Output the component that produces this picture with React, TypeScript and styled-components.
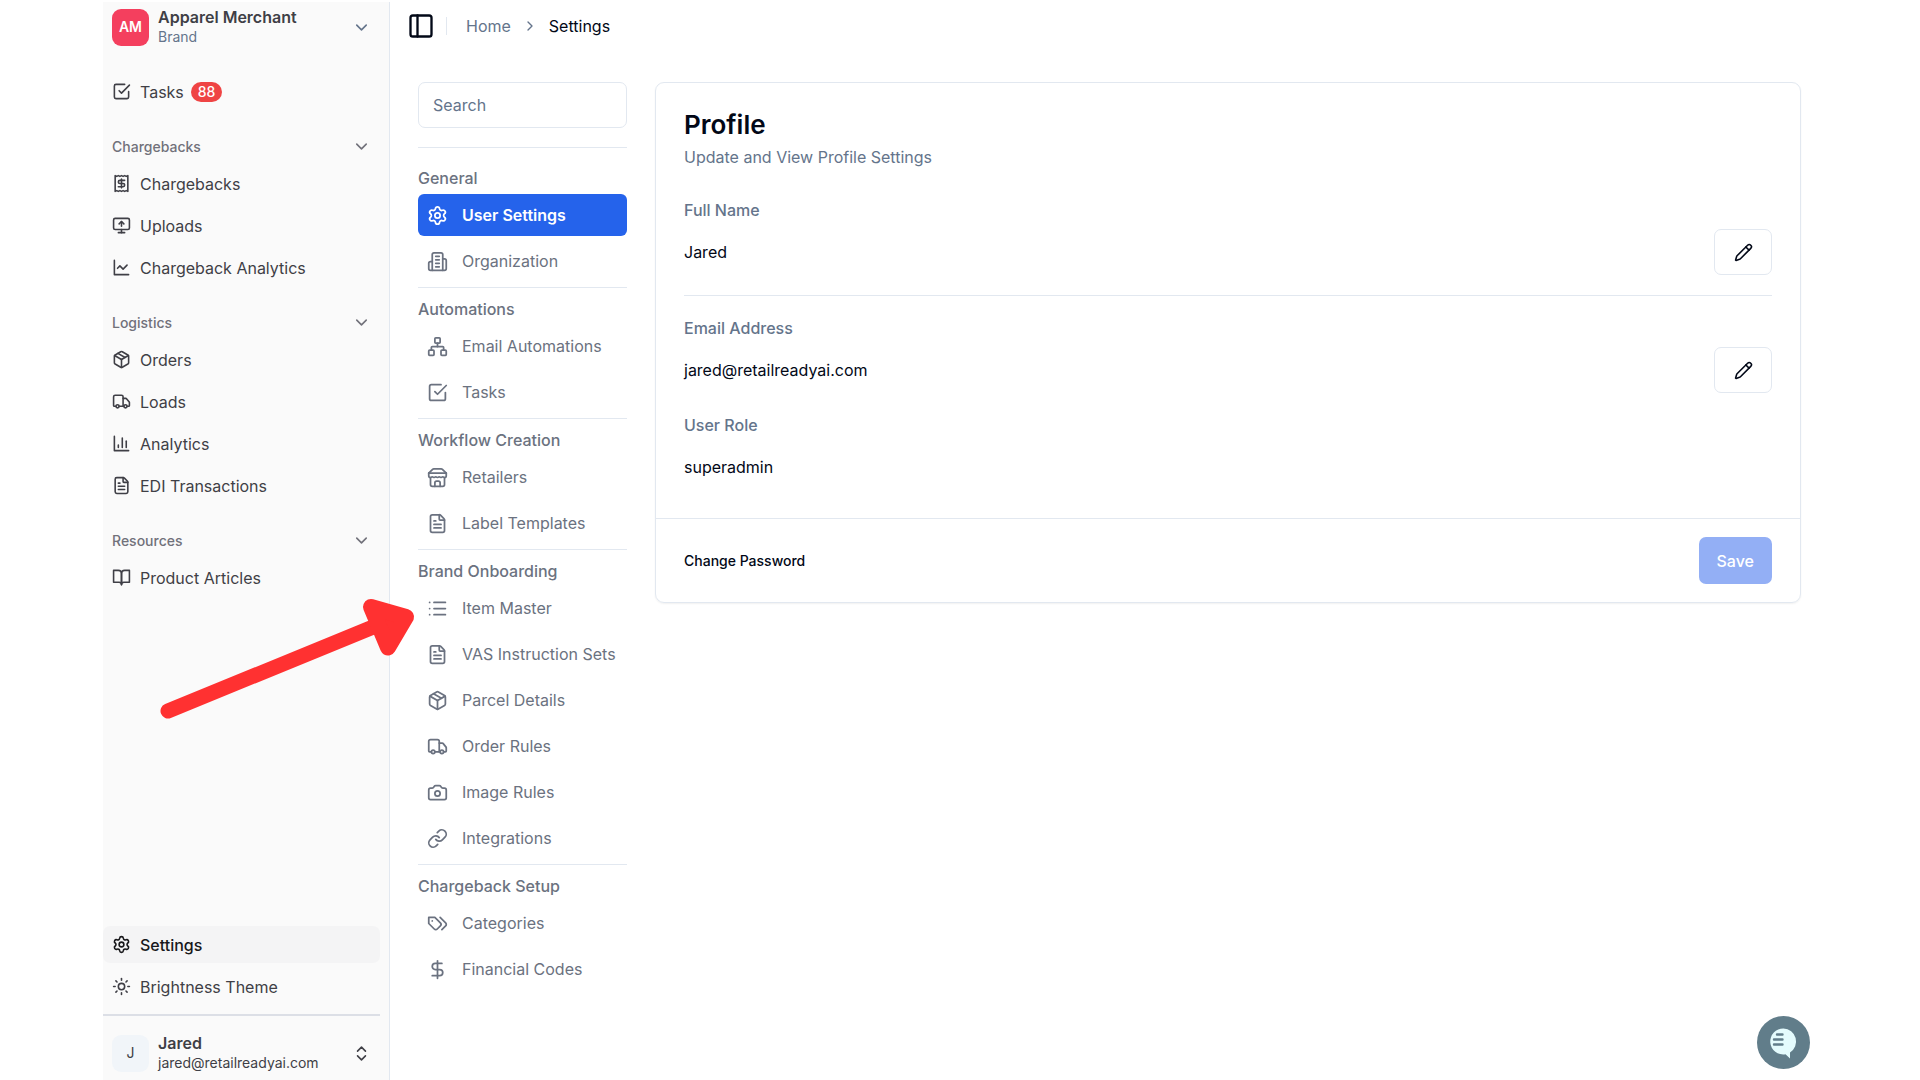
import React from "react";
import styled, { createGlobalStyle, css } from "styled-components";
import {
  Camera,
  ChevronDown,
  ChevronRight,
  ChevronsUpDown,
  DollarSign,
  FileText,
  Link,
  List,
  LucideIcon,
  MonitorUp,
  Network,
  Package,
  PanelLeft,
  Pencil,
  Settings,
  Sun,
  Truck,
} from "lucide-react";

const GlobalStyle = createGlobalStyle`
  *, *::before, *::after { box-sizing: border-box; }
  body {
    margin: 0;
    background: #ffffff;
    color: #020817;
    font-family: Inter, "Liberation Sans", sans-serif;
    font-size: 16px;
    line-height: 24px;
  }
  button, input { font: inherit; color: inherit; }
  button { cursor: pointer; }
  a { color: inherit; text-decoration: none; }
  h1, h2, p, ul, dl, dd { margin: 0; padding: 0; }
  ul { list-style: none; }
  svg { flex-shrink: 0; }
`;

type GlyphProps = { size?: number };

const stroke = (size: number) => ({
  width: size,
  height: size,
  viewBox: "0 0 24 24",
  fill: "none",
  stroke: "currentColor",
  strokeWidth: 2,
  strokeLinecap: "round" as const,
  strokeLinejoin: "round" as const,
  "aria-hidden": true,
});

const TaskIcon = ({ size = 24 }: GlyphProps) => (
  <svg {...stroke(size)}>
    <path d="m9 11 3 3L22 4" />
    <path d="M21 12v7a2 2 0 0 1-2 2H5a2 2 0 0 1-2-2V5a2 2 0 0 1 2-2h11" />
  </svg>
);

const ReceiptIcon = ({ size = 24 }: GlyphProps) => (
  <svg {...stroke(size)}>
    <path d="M4 2v20l2-1 2 1 2-1 2 1 2-1 2 1 2-1 2 1V2l-2 1-2-1-2 1-2-1-2 1-2-1-2 1Z" />
    <path d="M16 8h-6a2 2 0 1 0 0 4h4a2 2 0 1 1 0 4H8" />
    <path d="M12 17.5v-11" />
  </svg>
);

const LineChartIcon = ({ size = 24 }: GlyphProps) => (
  <svg {...stroke(size)}>
    <path d="M3 3v18h18" />
    <path d="m19 9-5 5-4-4-3 3" />
  </svg>
);

const BarChartIcon = ({ size = 24 }: GlyphProps) => (
  <svg {...stroke(size)}>
    <path d="M3 3v18h18" />
    <path d="M18 17V9" />
    <path d="M13 17V5" />
    <path d="M8 17v-3" />
  </svg>
);

const BookIcon = ({ size = 24 }: GlyphProps) => (
  <svg {...stroke(size)}>
    <path d="M2 3h6a4 4 0 0 1 4 4v14a3 3 0 0 0-3-3H2z" />
    <path d="M22 3h-6a4 4 0 0 0-4 4v14a3 3 0 0 1 3-3h7z" />
  </svg>
);

const BuildingIcon = ({ size = 24 }: GlyphProps) => (
  <svg {...stroke(size)}>
    <path d="M6 22V4a2 2 0 0 1 2-2h8a2 2 0 0 1 2 2v18Z" />
    <path d="M6 12H4a2 2 0 0 0-2 2v6a2 2 0 0 0 2 2h2" />
    <path d="M18 9h2a2 2 0 0 1 2 2v9a2 2 0 0 1-2 2h-2" />
    <path d="M10 6h4M10 10h4M10 14h4M10 18h4" />
  </svg>
);

const StoreIcon = ({ size = 24 }: GlyphProps) => (
  <svg {...stroke(size)}>
    <path d="m2 7 4.410-4.410A2 2 0 0 1 7.830 2h8.340a2 2 0 0 1 1.420.59L22 7" />
    <path d="M4 12v8a2 2 0 0 0 2 2h12a2 2 0 0 0 2-2v-8" />
    <path d="M15 22v-4a2 2 0 0 0-2-2h-2a2 2 0 0 0-2 2v4" />
    <path d="M2 7h20" />
    <path d="M22 7v3a2 2 0 0 1-2 2a2.700 2.700 0 0 1-1.590-.63.7.7 0 0 0-.82 0A2.700 2.700 0 0 1 16 12a2.700 2.700 0 0 1-1.590-.63.7.7 0 0 0-.82 0A2.700 2.700 0 0 1 12 12a2.700 2.700 0 0 1-1.590-.63.7.7 0 0 0-.82 0A2.700 2.700 0 0 1 8 12a2.700 2.700 0 0 1-1.590-.63.7.7 0 0 0-.82 0A2.700 2.700 0 0 1 4 12a2 2 0 0 1-2-2V7" />
  </svg>
);

const TagsIcon = ({ size = 24 }: GlyphProps) => (
  <svg {...stroke(size)}>
    <path d="M9 5H2v7l6.290 6.290c.94.94 2.480.94 3.420 0l3.580-3.580c.94-.94.94-2.480 0-3.420L9 5Z" />
    <path d="M6 9.010V9" />
    <path d="m15 5 6.300 6.300a2.400 2.400 0 0 1 0 3.400L17 19" />
  </svg>
);

type Icon = LucideIcon | React.FC<GlyphProps>;
type Entry = { label: string; icon: Icon; active?: boolean; count?: number };
type Section = { title: string; items: Entry[] };

const sidebarSections: Section[] = [
  {
    title: "Chargebacks",
    items: [
      { label: "Chargebacks", icon: ReceiptIcon },
      { label: "Uploads", icon: MonitorUp },
      { label: "Chargeback Analytics", icon: LineChartIcon },
    ],
  },
  {
    title: "Logistics",
    items: [
      { label: "Orders", icon: Package },
      { label: "Loads", icon: Truck },
      { label: "Analytics", icon: BarChartIcon },
      { label: "EDI Transactions", icon: FileText },
    ],
  },
  { title: "Resources", items: [{ label: "Product Articles", icon: BookIcon }] },
];

const settingsSections: Section[] = [
  {
    title: "General",
    items: [
      { label: "User Settings", icon: Settings, active: true },
      { label: "Organization", icon: BuildingIcon },
    ],
  },
  {
    title: "Automations",
    items: [
      { label: "Email Automations", icon: Network },
      { label: "Tasks", icon: TaskIcon },
    ],
  },
  {
    title: "Workflow Creation",
    items: [
      { label: "Retailers", icon: StoreIcon },
      { label: "Label Templates", icon: FileText },
    ],
  },
  {
    title: "Brand Onboarding",
    items: [
      { label: "Item Master", icon: List },
      { label: "VAS Instruction Sets", icon: FileText },
      { label: "Parcel Details", icon: Package },
      { label: "Order Rules", icon: Truck },
      { label: "Image Rules", icon: Camera },
      { label: "Integrations", icon: Link },
    ],
  },
  {
    title: "Chargeback Setup",
    items: [
      { label: "Categories", icon: TagsIcon },
      { label: "Financial Codes", icon: DollarSign },
    ],
  },
];

const Page = styled.div`
  position: relative;
  display: grid;
  grid-template-columns: 287px minmax(0, 1fr);
  min-height: 100vh;
  padding: 2px 103px 0;
`;

const Sidebar = styled.aside`
  display: flex;
  flex-direction: column;
  padding-right: 9px;
  background: #fafafa;
  border-right: 1px solid #e2e8f0;
`;

const Account = styled.button`
  display: flex;
  align-items: center;
  gap: 9px;
  padding: 0 9px;
  border: 0;
  background: none;
  color: #3f3f46;
  text-align: left;
`;

const Avatar = styled.span<{ $brand?: boolean }>`
  display: grid;
  place-items: center;
  width: 37px;
  height: 37px;
  border-radius: 9px;
  font-size: 14px;
  background: #f1f5f9;
  ${(p) =>
    p.$brand &&
    css`
      background: #f43f5e;
      color: #ffffff;
      font-weight: 600;
    `}
`;

const AccountText = styled.span`
  display: grid;
  flex: 1;
`;

const AccountName = styled.span`
  font-weight: 600;
  line-height: 20px;
`;

const AccountNote = styled.span<{ $muted?: boolean }>`
  font-size: 14px;
  line-height: 20px;
  color: ${(p) => (p.$muted ? "#64748b" : "#3f3f46")};
`;

const SidebarTop = styled.div`
  display: flex;
  flex-direction: column;
  padding: 5px 0 17px;
`;

const SidebarGroup = styled.div`
  padding: 9px 0;
`;

const GroupToggle = styled.button`
  display: flex;
  align-items: center;
  justify-content: space-between;
  width: 100%;
  height: 37px;
  padding: 0 9px;
  border: 0;
  background: none;
  color: #71717a;
  font-size: 14px;
  font-weight: 500;
`;

const SidebarList = styled.ul`
  display: grid;
  gap: 5px;
`;

const SidebarLink = styled.a<{ $active?: boolean }>`
  display: flex;
  align-items: center;
  gap: 9px;
  height: 37px;
  padding: 0 9px;
  border-radius: 7px;
  color: #3f3f46;
  ${(p) =>
    p.$active &&
    css`
      background: #f4f4f5;
      color: #18181b;
      font-weight: 500;
    `}
`;

const LinkText = styled.span`
  display: flex;
  align-items: center;
  gap: 7px;
`;

const Count = styled.span`
  padding: 0 7px;
  border-radius: 10px;
  background: #ef4444;
  color: #ffffff;
  font-size: 14px;
  font-weight: 500;
  line-height: 20px;
`;

const SidebarFooter = styled.div`
  display: flex;
  flex-direction: column;
  margin-top: auto;
  padding-bottom: 7px;
`;

const FooterRule = styled.hr`
  width: 100%;
  height: 2px;
  margin: 9px 0 17px;
  border: 0;
  background: #dcdfe6;
`;

const Content = styled.div`
  padding-left: 17px;
`;

const TopBar = styled.header`
  display: flex;
  align-items: center;
  height: 48px;
`;

const PanelButton = styled.button`
  display: flex;
  padding: 0;
  border: 0;
  background: none;
`;

const TopDivider = styled.span`
  width: 1px;
  height: 18px;
  margin: 0 19px 0 11px;
  background: #e2e8f0;
`;

const Crumbs = styled.nav`
  display: flex;
  align-items: center;
  gap: 11px;
  color: #64748b;
`;

const CurrentCrumb = styled.span`
  color: #020817;
`;

const Body = styled.div`
  display: grid;
  grid-template-columns: 209px minmax(0, 1fr);
  align-items: start;
  gap: 28px;
  padding: 32px 16px 28px 11px;
`;

const SearchInput = styled.input`
  display: block;
  width: 100%;
  height: 46px;
  padding: 0 14px;
  border: 1px solid #e2e8f0;
  border-radius: 7px;
  background: #ffffff;
  outline: 0;
  &::placeholder { color: #64748b; opacity: 1; }
`;

const SettingsNav = styled.nav`
  margin-top: 19px;
  border-top: 1px solid #e2e8f0;
  padding-top: 9px;
`;

const NavGroup = styled.section`
  padding: 9px 0 5px;
  & + & { border-top: 1px solid #e2e8f0; }
`;

const NavHeading = styled.h2`
  padding-bottom: 4px;
  color: #6b7280;
  font-size: 16px;
  font-weight: 500;
  line-height: 24px;
`;

const NavList = styled.ul`
  display: grid;
  gap: 4px;
`;

const NavLink = styled.a<{ $active?: boolean }>`
  display: flex;
  align-items: center;
  gap: 14px;
  height: 42px;
  padding: 0 9px;
  border-radius: 6px;
  color: #6b7280;
  white-space: nowrap;
  ${(p) =>
    p.$active &&
    css`
      background: #2563eb;
      color: #ffffff;
      font-weight: 600;
    `}
`;

const Card = styled.main`
  border: 1px solid #e2e8f0;
  border-radius: 9px;
  box-shadow: 0 1px 2px rgba(0, 0, 0, 0.06);
`;

const CardBody = styled.div`
  padding: 28px;
`;

const Title = styled.h1`
  font-size: 26px;
  font-weight: 600;
  line-height: 28px;
`;

const Subtitle = styled.p`
  margin: 6px 0 29px;
  color: #64748b;
`;

const Field = styled.div<{ $ruled?: boolean }>`
  padding-bottom: 20px;
  ${(p) =>
    p.$ruled &&
    css`
      margin-bottom: 20px;
      border-bottom: 1px solid #e2e8f0;
    `}
  &:last-child { padding-bottom: 0; }
`;

const FieldLabel = styled.dt`
  margin-bottom: 7px;
  color: #64748b;
  font-weight: 500;
`;

const FieldValue = styled.dd`
  display: flex;
  align-items: center;
  justify-content: space-between;
  height: 46px;
`;

const EditButton = styled.button`
  display: grid;
  place-items: center;
  width: 58px;
  height: 46px;
  border: 1px solid #e2e8f0;
  border-radius: 7px;
  background: #ffffff;
`;

const CardFooter = styled.footer`
  display: flex;
  align-items: center;
  justify-content: space-between;
  padding: 18px 28px;
  border-top: 1px solid #e2e8f0;
`;

const TextButton = styled.button`
  padding: 0;
  border: 0;
  background: none;
  font-size: 14px;
  font-weight: 500;
`;

const SaveButton = styled.button`
  height: 47px;
  padding: 0 18px;
  border: 0;
  border-radius: 7px;
  background: #93aff5;
  color: #ffffff;
  font-weight: 500;
`;

const ChatButton = styled.button`
  position: fixed;
  right: 110px;
  bottom: 11px;
  display: flex;
  padding: 0;
  border: 0;
  border-radius: 50%;
  background: none;
`;

const Arrow = styled.svg`
  position: absolute;
  left: 150px;
  top: 590px;
  pointer-events: none;
`;

const SidebarEntry = ({ label, icon: Glyph, active, count }: Entry) => (
  <li>
    <SidebarLink href="#" $active={active}>
      <Glyph size={19} />
      <LinkText>
        {label}
        {count !== undefined && <Count>{count}</Count>}
      </LinkText>
    </SidebarLink>
  </li>
);

export default function App() {
  return (
    <Page>
      <GlobalStyle />
      <Sidebar>
        <SidebarTop>
          <Account type="button">
            <Avatar $brand>AM</Avatar>
            <AccountText>
              <AccountName>Apparel Merchant</AccountName>
              <AccountNote $muted>Brand</AccountNote>
            </AccountText>
            <ChevronDown size={19} color="#64748b" />
          </Account>
        </SidebarTop>
        <SidebarGroup>
          <SidebarList>
            <SidebarEntry label="Tasks" icon={TaskIcon} count={88} />
          </SidebarList>
        </SidebarGroup>
        {sidebarSections.map((section) => (
          <SidebarGroup key={section.title}>
            <GroupToggle type="button">
              {section.title}
              <ChevronDown size={19} />
            </GroupToggle>
            <SidebarList>
              {section.items.map((item) => (
                <SidebarEntry key={item.label} {...item} />
              ))}
            </SidebarList>
          </SidebarGroup>
        ))}
        <SidebarFooter>
          <SidebarList>
            <SidebarEntry label="Settings" icon={Settings} active />
            <SidebarEntry label="Brightness Theme" icon={Sun} />
          </SidebarList>
          <FooterRule />
          <Account type="button">
            <Avatar>J</Avatar>
            <AccountText>
              <AccountName>Jared</AccountName>
              <AccountNote>jared@retailreadyai.com</AccountNote>
            </AccountText>
            <ChevronsUpDown size={19} />
          </Account>
        </SidebarFooter>
      </Sidebar>

      <Content>
        <TopBar>
          <PanelButton type="button" aria-label="Toggle sidebar">
            <PanelLeft size={28} />
          </PanelButton>
          <TopDivider />
          <Crumbs aria-label="Breadcrumb">
            <a href="#">Home</a>
            <ChevronRight size={16} />
            <CurrentCrumb aria-current="page">Settings</CurrentCrumb>
          </Crumbs>
        </TopBar>
        <Body>
          <div>
            <SearchInput type="search" placeholder="Search" aria-label="Search" />
            <SettingsNav aria-label="Settings">
              {settingsSections.map((section) => (
                <NavGroup key={section.title}>
                  <NavHeading>{section.title}</NavHeading>
                  <NavList>
                    {section.items.map(({ label, icon: Glyph, active }) => (
                      <li key={label}>
                        <NavLink href="#" $active={active}>
                          <Glyph size={21} />
                          {label}
                        </NavLink>
                      </li>
                    ))}
                  </NavList>
                </NavGroup>
              ))}
            </SettingsNav>
          </div>

          <Card>
            <CardBody>
              <Title>Profile</Title>
              <Subtitle>Update and View Profile Settings</Subtitle>
              <dl>
                <Field $ruled>
                  <FieldLabel>Full Name</FieldLabel>
                  <FieldValue>
                    Jared
                    <EditButton type="button" aria-label="Edit full name">
                      <Pencil size={19} />
                    </EditButton>
                  </FieldValue>
                </Field>
                <Field>
                  <FieldLabel>Email Address</FieldLabel>
                  <FieldValue>
                    jared@retailreadyai.com
                    <EditButton type="button" aria-label="Edit email address">
                      <Pencil size={19} />
                    </EditButton>
                  </FieldValue>
                </Field>
                <Field>
                  <FieldLabel>User Role</FieldLabel>
                  <FieldValue>superadmin</FieldValue>
                </Field>
              </dl>
            </CardBody>
            <CardFooter>
              <TextButton type="button">Change Password</TextButton>
              <SaveButton type="button">Save</SaveButton>
            </CardFooter>
          </Card>
        </Body>
      </Content>

      <Arrow width="275" height="140" viewBox="150 590 275 140" aria-hidden="true">
        <path d="M168 711L378 625" stroke="#ff3131" strokeWidth="15" strokeLinecap="round" />
        <path
          d="M371 607L406 617L388 647.500Z"
          fill="#ff3131"
          stroke="#ff3131"
          strokeWidth="16"
          strokeLinejoin="round"
        />
      </Arrow>

      <ChatButton type="button" aria-label="Open chat">
        <svg width="53" height="53" viewBox="0 0 53 53" aria-hidden="true">
          <circle cx="26.500" cy="26.500" r="26.500" fill="#617d8a" />
          <path d="M26.500 12.500a13 13 0 1 0 2 25.800l4.500 4.200v-6a13 13 0 0 0-6.500-24z" fill="#e4fbfd" />
          <path d="M20 18.500h5.500M17 23.500h8.500M17 28.500h8.500" stroke="#617d8a" strokeWidth="2.400" strokeLinecap="round" />
        </svg>
      </ChatButton>
    </Page>
  );
}
